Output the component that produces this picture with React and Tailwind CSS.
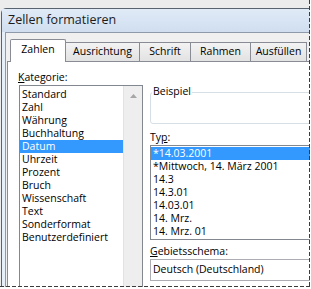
import React from 'react';

const categories = [
  'Standard',
  'Zahl',
  'Währung',
  'Buchhaltung',
  'Datum',
  'Uhrzeit',
  'Prozent',
  'Bruch',
  'Wissenschaft',
  'Text',
  'Sonderformat',
  'Benutzerdefiniert',
];

const types = [
  '*14.03.2001',
  '*Mittwoch, 14. März 2001',
  '14.3',
  '14.3.01',
  '14.03.01',
  '14. Mrz.',
  '14. Mrz. 01',
];

const tabs = [
  { label: 'Ausrichtung', w: 'w-[74px]' },
  { label: 'Schrift', w: 'w-[51px]' },
  { label: 'Rahmen', w: 'w-[60px]' },
  { label: 'Ausfüllen', w: 'w-[56px]' },
];

export default function App() {
  return (
    <div className="relative w-[311px] h-[289px] overflow-hidden bg-[#ececec] pt-[8px] pl-[1px] flex flex-col items-start text-black font-['Open_Sans',sans-serif] text-[10.5px]">
      <div className="shrink-0 w-[340px] min-w-[340px] h-[300px] border border-[#59636f] rounded-tl-[5px] bg-[#dde8f4] flex flex-col">
        {/* title bar */}
        <div className="shrink-0 h-[23px] flex items-center pl-[6px] bg-gradient-to-b from-[#e0ebf7] to-[#d0def0] text-[12.5px] text-[#1b1b1b]">
          Zellen formatieren
        </div>

        <div className="flex flex-1">
          <div className="w-[3px] shrink-0 bg-[#e6eef7]" />
          <div className="flex-1 flex flex-col border-l border-t border-[#8e9aa9] bg-[#f0f0f0]">
            {/* tabs */}
            <div className="shrink-0 flex items-end h-[28px] pl-[4px]">
              <div className="relative z-10 w-[56px] h-[23px] -mb-px bg-white border-l border-t border-r border-[#898c95] rounded-t-[2px] flex items-center justify-center pb-[2px]">
                Zahlen
              </div>
              {tabs.map((t) => (
                <div
                  key={t.label}
                  className={`${t.w} h-[19px] border-t border-r border-[#898c95] bg-gradient-to-b from-[#f3f3f3] to-[#e2e2e2] flex items-center justify-center`}
                >
                  {t.label}
                </div>
              ))}
            </div>

            {/* panel */}
            <div className="flex-1 ml-[1px] border-l border-t border-[#898c95] bg-white flex">
              {/* left column */}
              <div className="shrink-0 pl-[10px] pt-[9px] flex flex-col">
                <div className="h-[13px] leading-[13px]">
                  <span className="underline underline-offset-[1px]">K</span>ategorie:
                </div>
                <div className="mt-[1px] ml-[1px] w-[124px] h-[240px] border border-[#828790] flex">
                  <div className="w-[103px] pt-[2px]">
                    {categories.map((c) => (
                      <div
                        key={c}
                        className={`h-[13px] leading-[13px] pl-[2px] ${c === 'Datum' ? 'bg-[#3399ff] text-white' : ''}`}
                      >
                        {c}
                      </div>
                    ))}
                  </div>
                  <div className="w-[19px] bg-[#eeeeee] border-l border-[#e2e2e2] flex justify-center pt-[8px]">
                    <svg width="7" height="4" viewBox="0 0 7 4">
                      <path d="M3.5 0 L7 4 L0 4 Z" fill="#a6a6a6" />
                    </svg>
                  </div>
                </div>
              </div>

              {/* right column */}
              <div className="shrink-0 w-[175px] ml-[7px] pt-[30px] flex flex-col">
                <div className="relative w-full h-[32px] border border-[#d5dfe5] rounded-[3px]">
                  <span className="absolute -top-[8px] left-[1px] bg-white px-[1px] leading-[13px]">
                    Beispiel
                  </span>
                </div>

                <div className="mt-[7px] h-[13px] leading-[13px]">
                  Ty<span className="underline underline-offset-[1px]">p</span>:
                </div>
                <div className="mt-[1px] w-full h-[95px] border border-[#828790] pt-[1px]">
                  {types.map((t, i) => (
                    <div
                      key={t}
                      className={`h-[13px] leading-[13px] pl-[2px] ${i === 0 ? 'bg-[#3399ff] text-white' : ''}`}
                    >
                      {t}
                    </div>
                  ))}
                </div>

                <div className="mt-[5px] h-[13px] leading-[13px]">
                  <span className="underline underline-offset-[1px]">G</span>ebietsschema:
                </div>
                <div className="mt-[1px] w-full h-[22px] border border-[#abadb3] flex items-center pl-[2px]">
                  Deutsch (Deutschland)
                </div>
              </div>
            </div>
          </div>
        </div>
      </div>

      {/* selection marquee */}
      <div className="absolute top-0 left-[309px] w-[1px] h-[287px] bg-[repeating-linear-gradient(180deg,#3c3c3c_0_4px,transparent_4px_6px)]" />
      <div className="absolute top-0 left-[310px] w-[1px] h-[289px] bg-white" />
      <div className="absolute top-[286px] left-0 w-[310px] h-[1px] bg-[repeating-linear-gradient(90deg,#3c3c3c_0_4px,transparent_4px_6px)]" />
      <div className="absolute top-[287px] left-0 w-[311px] h-[2px] bg-white" />
    </div>
  );
}
